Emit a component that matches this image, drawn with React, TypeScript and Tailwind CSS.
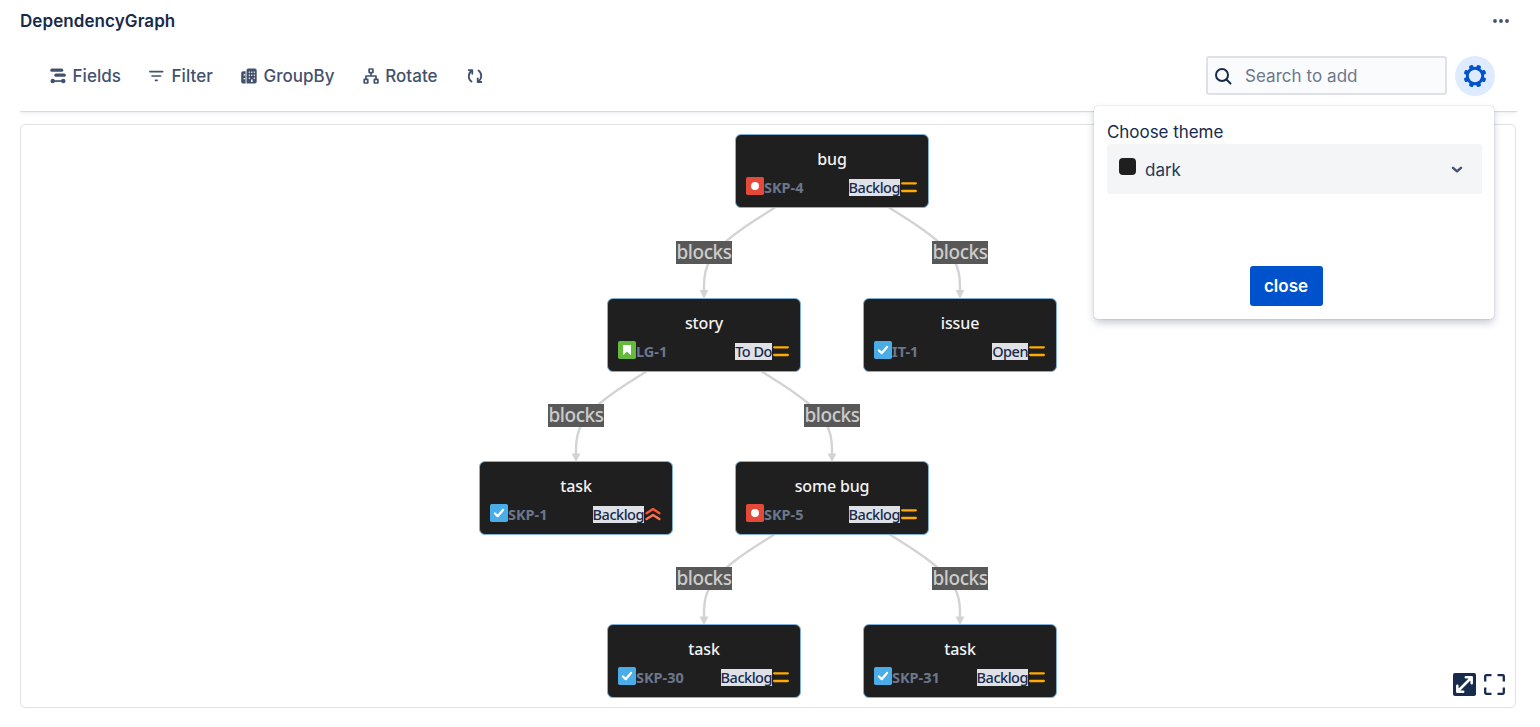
import React from "react";

type Kind = "bug" | "story" | "task";
type GraphNode = {
  x: number;
  y: number;
  title: string;
  kind: Kind;
  id: string;
  status: string;
  high?: boolean;
};

const nodes: GraphNode[] = [
  { x: 832, y: 134, title: "bug", kind: "bug", id: "SKP-4", status: "Backlog" },
  { x: 704, y: 297.5, title: "story", kind: "story", id: "LG-1", status: "To Do" },
  { x: 960, y: 297.5, title: "issue", kind: "task", id: "IT-1", status: "Open" },
  { x: 576, y: 460.5, title: "task", kind: "task", id: "SKP-1", status: "Backlog", high: true },
  { x: 832, y: 460.5, title: "some bug", kind: "bug", id: "SKP-5", status: "Backlog" },
  { x: 704, y: 624, title: "task", kind: "task", id: "SKP-30", status: "Backlog" },
  { x: 960, y: 624, title: "task", kind: "task", id: "SKP-31", status: "Backlog" },
];

const edges = [
  { from: 832, to: 704, y: 207.5 },
  { from: 832, to: 960, y: 207.5 },
  { from: 704, to: 576, y: 371 },
  { from: 704, to: 832, y: 371 },
  { from: 832, to: 704, y: 534 },
  { from: 832, to: 960, y: 534 },
];

const OX = 21;
const OY = 125;

function edgePath(from: number, to: number, y: number) {
  const dir = to < from ? -1 : 1;
  const ax = from + dir * 57;
  const by = y + 44.5;
  const cy = y + 86;
  const p = (n: number) => n.toFixed(1);
  return [
    `M${p(ax)},${p(y)}`,
    `L${p((5 * ax + to) / 6)},${p((5 * y + by) / 6)}`,
    `C${p((2 * ax + to) / 3)},${p((2 * y + by) / 3)} ${p((ax + 2 * to) / 3)},${p((y + 2 * by) / 3)} ${p((ax + 5 * to) / 6)},${p((y + 4 * by + cy) / 6)}`,
    `C${p(to)},${p((2 * by + cy) / 3)} ${p(to)},${p((by + 2 * cy) / 3)} ${p(to)},${p((by + 5 * cy) / 6)}`,
    `L${p(to)},${p(cy)}`,
  ].join(" ");
}

function KindIcon({ kind }: { kind: Kind }) {
  const fill = kind === "bug" ? "#e5493a" : kind === "story" ? "#63ba3c" : "#4bade8";
  return (
    <svg className="-mt-px -ml-[0.5px] h-[18px] w-[18px] shrink-0" viewBox="0 0 16 16">
      <rect width="16" height="16" rx="1.6" fill={fill} />
      {kind === "bug" && <circle cx="8" cy="8" r="3.5" fill="#fff" />}
      {kind === "story" && <path d="M5 3.5h6a.5.5 0 0 1 .5.5v8.6L8 9.4l-3.5 3.2V4a.5.5 0 0 1 .5-.5z" fill="#fff" />}
      {kind === "task" && (
        <path d="M4.4 8.5 6.8 10.8 11.6 5.3" fill="none" stroke="#fff" strokeWidth="2" strokeLinecap="round" strokeLinejoin="round" />
      )}
    </svg>
  );
}

function PriorityIcon({ high }: { high?: boolean }) {
  return (
    <svg className="h-[18px] w-[18px] shrink-0" viewBox="0 0 18 18" fill="none" strokeLinecap="round" strokeLinejoin="round">
      {high ? (
        <>
          <path d="M2.6 8.2 9 4.1l6.4 4.1" stroke="#ff5630" strokeWidth="2.4" />
          <path d="M2.6 14 9 9.9l6.4 4.1" stroke="#ff7452" strokeWidth="2.4" />
        </>
      ) : (
        <path d="M2.2 5.3h13.6M2.2 13h13.6" stroke="#ffab00" strokeWidth="2.3" />
      )}
    </svg>
  );
}

function NodeCard({ node }: { node: GraphNode }) {
  return (
    <div
      className="absolute flex h-[74px] w-[194px] flex-col rounded-[6px] border border-[#81b1db] bg-[#1f1f1f] px-[10px] pt-[12px] font-['Noto_Sans','Open_Sans',sans-serif]"
      style={{ left: node.x - 97 - OX, top: node.y - OY }}
    >
      <div className="h-[24px] text-center text-[16px] leading-[24px] font-medium tracking-[-0.15px] text-[#f2f2f2]">{node.title}</div>
      <div className="mt-[7px] flex h-[20px] items-start">
        <KindIcon kind={node.kind} />
        <span className="ml-[0.5px] text-[14.5px] leading-[18px] font-bold text-[#6b778c]">{node.id}</span>
        <span className="mt-px ml-auto flex h-[17px] items-start bg-[#dfe1e6] text-[14.5px] leading-[16px] font-medium tracking-[-0.48px] text-[#172b4d]">{node.status}</span>
        <PriorityIcon high={node.high} />
      </div>
    </div>
  );
}

function FieldsIcon() {
  return (
    <svg className="h-[18px] w-[18px]" viewBox="0 0 18 18" fill="#42526e">
      <rect x="1.3" y="1.6" width="13" height="3.2" rx="1.6" />
      <rect x="5.3" y="6.6" width="11.5" height="3.2" rx="1.6" />
      <circle cx="3.7" cy="14" r="2.2" />
      <circle cx="14.3" cy="14" r="2.2" />
      <rect x="3" y="13.2" width="12" height="1.7" />
    </svg>
  );
}

function FilterIcon() {
  return (
    <svg className="h-[18px] w-[18px]" viewBox="0 0 18 18" fill="none" stroke="#42526e" strokeWidth="1.7" strokeLinecap="round">
      <path d="M1.9 4.6h12.8M4.1 9h8.4M7.5 13.3h1.6" />
    </svg>
  );
}

function BuildingIcon() {
  return (
    <svg className="h-[18px] w-[18px]" viewBox="0 0 18 18">
      <path d="M3 4.200h2.600v12.300H3A1.800 1.800 0 0 1 1.200 14.700V6A1.800 1.800 0 0 1 3 4.200z" fill="#42526e" />
      <path d="M8.400 1.500h6.300a2 2 0 0 1 2 2V14.500a2 2 0 0 1-2 2H6.500V3.500a2 2 0 0 1 1.900-2z" fill="#42526e" />
      <path d="M3.600 7.200h1.700v1.200H3.600zM3.600 11h1.700v1.200H3.600zM8.800 4.400h1v1.500h-1zM11.300 4.400h1v1.500h-1zM13.800 4.400h1v1.500h-1zM8.800 7.400h1v1.500h-1zM11.300 7.400h1v1.500h-1zM13.800 7.400h1v1.500h-1zM8.800 10.400h1v1.500h-1zM13.800 10.400h1v1.500h-1zM11 12.400h1.600v2.600h-1.600z" fill="#fff" />
    </svg>
  );
}

function TreeIcon() {
  return (
    <svg className="h-[18px] w-[18px]" viewBox="0 0 18 18" fill="none" stroke="#42526e" strokeWidth="1.7" strokeLinejoin="round">
      <rect x="7.1" y="2" width="3.8" height="3.6" rx=".3" />
      <rect x="2.2" y="12.4" width="3.6" height="3.6" rx=".3" />
      <rect x="12.3" y="12.4" width="3.6" height="3.6" rx=".3" />
      <path d="M9 5.6v3.3M4 12.400V9h10v3.400" />
    </svg>
  );
}

function RefreshIcon() {
  return (
    <svg className="ml-px h-[18px] w-[18px]" viewBox="0 0 18 18" fill="none" stroke="#42526e" strokeWidth="1.8" strokeLinecap="round" strokeLinejoin="round">
      <path d="M2.7 3.1h3.6v3.7M5.9 3.5C1.7 6.5 1.9 12 5.5 14.6" />
      <path d="M15.3 15h-3.6v-3.7M12.1 14.6c4.2-3 4-8.5.4-11.1" />
    </svg>
  );
}

function Gear() {
  return (
    <svg className="h-6 w-6" viewBox="0 0 24 24">
      {[22.5, 67.5, 112.5, 157.5, 202.5, 247.5, 292.5, 337.5].map((a) => (
        <rect key={a} x="9.800" y="0.600" width="4.400" height="5" rx="1.300" fill="#0052cc" transform={`rotate(${a} 12 12)`} />
      ))}
      <circle cx="12" cy="12" r="7.700" fill="none" stroke="#0052cc" strokeWidth="3" />
    </svg>
  );
}

function ToolButton({ icon, label }: { icon: React.ReactNode; label?: string }) {
  return (
    <button className="flex items-center gap-[5.5px] text-[17px] leading-6 font-medium tracking-[0.05px] text-[#42526e]">
      {icon}
      {label && <span>{label}</span>}
    </button>
  );
}

function ThemePanel() {
  return (
    <div className="absolute top-[106px] left-[1094px] flex h-[213px] w-[400px] flex-col rounded-[4px] bg-white px-[13px] pt-[14px] shadow-[0_0_1px_rgba(9,30,66,0.4),0_4px_8px_-1px_rgba(9,30,66,0.28)]">
      <div className="h-6 text-[17px] leading-6 tracking-[-0.05px] text-[#172b4d]">Choose theme</div>
      <div className="flex h-[50px] w-[375px] items-center rounded-[3px] bg-[#f4f5f7] pr-4 pl-3">
        <span className="mb-[6px] h-[17px] w-[17px] rounded-[4px] bg-[#1f1f1f]" />
        <span className="ml-[9px] pt-[3px] text-[17px] text-[#253858]">dark</span>
        <svg className="ml-auto h-[18px] w-[18px]" viewBox="0 0 18 18" fill="none" stroke="#42526e" strokeWidth="2.4" strokeLinecap="round" strokeLinejoin="round">
          <path d="M5 7.8 9 11.3l4-3.5" />
        </svg>
      </div>
      <button className="mt-[72px] mr-4 h-10 w-[73px] self-center rounded-[3px] bg-[#0052cc] pt-px text-[17px] font-semibold text-white">close</button>
    </div>
  );
}

export default function App() {
  return (
    <div className="relative flex h-[727px] w-[1540px] flex-col overflow-hidden bg-white pl-5 font-['Inter','Liberation_Sans',sans-serif]">
      <header className="flex h-[42px] items-center justify-between pr-[31px]">
        <h1 className="text-[17px] leading-6 font-semibold tracking-[0.08px] text-[#172b4d]">DependencyGraph</h1>
        <svg className="h-[6px] w-4" viewBox="0 0 16 6" fill="#42526e">
          <circle cx="2" cy="3" r="1.9" />
          <circle cx="8" cy="3" r="1.9" />
          <circle cx="14" cy="3" r="1.9" />
        </svg>
      </header>

      <div className="flex h-[69px] w-[1497px] items-center pr-[22px] pb-[2px] pl-[29px] shadow-[0_1px_1px_rgba(9,30,66,0.13),0_3px_5px_rgba(9,30,66,0.05)] [clip-path:inset(0_0_-8px_0)]">
        <div className="flex items-center gap-[27px]">
          <ToolButton icon={<FieldsIcon />} label="Fields" />
          <ToolButton icon={<FilterIcon />} label="Filter" />
          <ToolButton icon={<BuildingIcon />} label="GroupBy" />
          <ToolButton icon={<TreeIcon />} label="Rotate" />
          <ToolButton icon={<RefreshIcon />} />
        </div>
        <div className="ml-auto flex items-center gap-2">
          <div className="flex h-[39px] w-[241px] items-center rounded-[3px] border-2 border-[#dfe1e6] bg-[#fafbfc] pl-[6px]">
            <svg className="h-[18px] w-[18px]" viewBox="0 0 18 18" fill="none" stroke="#172b4d" strokeWidth="2" strokeLinecap="round">
              <circle cx="8" cy="8" r="6" />
              <path d="m12.5 12.5 4 4" />
            </svg>
            <span className="ml-[13px] pt-[2px] text-[17px] tracking-[0.05px] text-[#6b778c]">Search to add</span>
          </div>
          <div className="flex h-10 w-10 items-center justify-center rounded-full bg-[#deebff]">
            <Gear />
          </div>
        </div>
      </div>

      <main className="relative mt-[13px] h-[584px] w-[1496px] rounded-[5px] border border-[#dfe1e6] bg-white">
        <svg className="absolute inset-0 h-[582px] w-[1494px]" viewBox={`${OX} ${OY} 1494 582`} fill="none">
          {edges.map((e, i) => (
            <g key={i}>
              <path d={edgePath(e.from, e.to, e.y)} stroke="#d3d3d3" strokeWidth="2.4" />
              <path d={`M${e.to - 4.5},${e.y + 82.5}h9l-4.5,8.5z`} fill="#d3d3d3" />
            </g>
          ))}
        </svg>
        {edges.map((e, i) => (
          <div
            key={i}
            className="absolute flex h-[23px] w-[56px] items-center justify-center bg-[#585858] font-['Noto_Sans','Open_Sans',sans-serif] text-[19px] leading-[23px] font-medium tracking-[-0.45px] text-[#cccccc]"
            style={{ left: e.to - 28 - OX, top: e.y + 33 - OY }}
          >
            blocks
          </div>
        ))}
        {nodes.map((n) => (
          <NodeCard key={n.id} node={n} />
        ))}
        <div className="absolute right-[10px] bottom-[11px] flex items-center gap-[8px]">
          <svg className="h-[23px] w-[23px]" viewBox="0 0 23 23" fill="none">
            <rect width="23" height="23" rx="2" fill="#172b4d" />
            <path d="M4.5 18.5 18.5 4.5M12.8 4.3h5.9v5.9M4.3 12.8v5.9h5.9" stroke="#fff" strokeWidth="2.5" strokeLinecap="round" strokeLinejoin="round" />
          </svg>
          <svg className="h-[21px] w-[21px]" viewBox="0 0 21 21" fill="none" stroke="#172b4d" strokeWidth="2.3">
            <path d="M1.2 7.5V2.2a1 1 0 0 1 1-1h5.3M13.5 1.2h5.3a1 1 0 0 1 1 1v5.3M19.8 13.5v5.3a1 1 0 0 1-1 1h-5.3M7.500 19.800H2.200a1 1 0 0 1-1-1v-5.300" />
          </svg>
        </div>
      </main>

      <ThemePanel />
    </div>
  );
}
